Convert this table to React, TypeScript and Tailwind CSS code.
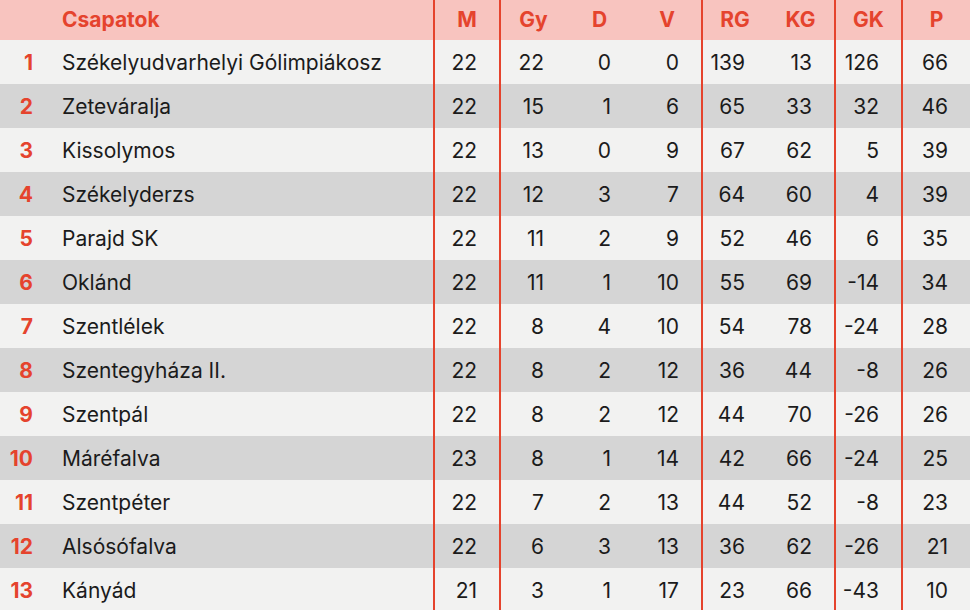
const ROWS: [string, number, number, number, number, number, number, number, number][] = [
  ['Székelyudvarhelyi Gólimpiákosz', 22, 22, 0, 0, 139, 13, 126, 66],
  ['Zeteváralja', 22, 15, 1, 6, 65, 33, 32, 46],
  ['Kissolymos', 22, 13, 0, 9, 67, 62, 5, 39],
  ['Székelyderzs', 22, 12, 3, 7, 64, 60, 4, 39],
  ['Parajd SK', 22, 11, 2, 9, 52, 46, 6, 35],
  ['Oklánd', 22, 11, 1, 10, 55, 69, -14, 34],
  ['Szentlélek', 22, 8, 4, 10, 54, 78, -24, 28],
  ['Szentegyháza II.', 22, 8, 2, 12, 36, 44, -8, 26],
  ['Szentpál', 22, 8, 2, 12, 44, 70, -26, 26],
  ['Máréfalva', 23, 8, 1, 14, 42, 66, -24, 25],
  ['Szentpéter', 22, 7, 2, 13, 44, 52, -8, 23],
  ['Alsósófalva', 22, 6, 3, 13, 36, 62, -26, 21],
  ['Kányád', 21, 3, 1, 17, 23, 66, -43, 10],
];

const HEAD = ['M', 'Gy', 'D', 'V', 'RG', 'KG', 'GK', 'P'];
// columns that start with a red divider line
const LINED = [0, 1, 4, 6, 7];

const GRID =
  'grid grid-cols-[62px_371px_66px_67px_67px_68px_66px_67px_67px_69px]';

export default function App() {
  return (
    <div
      className="w-[970px] h-[610px] overflow-hidden bg-[#f2f2f1] text-[21px] text-[#1b1b1b]"
      style={{ fontFamily: 'Inter, "Noto Sans", sans-serif' }}
    >
      <div className={`${GRID} h-[40px] bg-[#f8c4bf] font-bold text-[#e5432d]`}>
        <div />
        <div className="flex items-center">Csapatok</div>
        {HEAD.map((h, i) => (
          <div
            key={h}
            className={`flex items-center justify-center ${LINED.includes(i) ? 'border-l-2 border-[#e5432d]' : ''}`}
          >
            {h}
          </div>
        ))}
      </div>
      {ROWS.map((r, idx) => (
        <div
          key={r[0]}
          className={`${GRID} h-[44px] ${idx % 2 ? 'bg-[#d5d5d5]' : 'bg-[#f2f2f1]'}`}
        >
          <div className="flex items-center justify-end pt-[2px] pr-[29px] font-bold text-[#e5432d]">
            {idx + 1}
          </div>
          <div className="flex items-center pt-[2px]">{r[0]}</div>
          {r.slice(1).map((v, i) => (
            <div
              key={i}
              className={`flex items-center justify-end pt-[2px] pr-[22px] ${LINED.includes(i) ? 'border-l-2 border-[#e5432d]' : ''}`}
            >
              {v}
            </div>
          ))}
        </div>
      ))}
    </div>
  );
}
